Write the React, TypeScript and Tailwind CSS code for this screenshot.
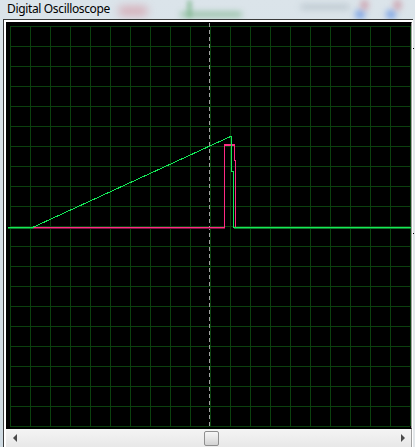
import React from "react";

const GRID = "#0b400e";
const SIG_G = "#14e858";
const SIG_M = "#ff2a84";

function Scope() {
  // SVG local coords: page x - 7, page y - 23
  const xs: number[] = [];
  const ys: number[] = [];
  for (let k = 0; k <= 20; k++) {
    xs.push(3 + 20 * k);
    ys.push(3 + 20 * k);
  }
  const X = (px: number) => px - 7 + 0.5;
  const Y = (py: number) => py - 23 + 0.5;
  return (
    <svg width={404} height={405} className="block" style={{ background: "#000" }}>
      <g shapeRendering="crispEdges" stroke={GRID} strokeWidth={1}>
        {xs.map((x) => (
          <line key={"v" + x} x1={x + 0.5} y1={3} x2={x + 0.5} y2={403} />
        ))}
        {ys.map((y) => (
          <line key={"h" + y} x1={3} y1={y + 0.5} x2={403} y2={y + 0.5} />
        ))}
      </g>
      <line
        x1={X(209)}
        y1={0}
        x2={X(209)}
        y2={405}
        stroke="#a0a0a0"
        strokeWidth={1}
        strokeDasharray="4 3"
        shapeRendering="crispEdges"
      />
      {/* magenta trace */}
      <polyline
        fill="none"
        stroke={SIG_M}
        strokeWidth={1}
        shapeRendering="crispEdges"
        points={`${X(10)},${Y(227)} ${X(224)},${Y(227)} ${X(224)},${Y(144)} ${X(234)},${Y(144)} ${X(234)},${Y(160)} ${X(235)},${Y(160)} ${X(235)},${Y(227)}`}
      />
      <line x1={X(224)} y1={Y(145)} x2={X(234)} y2={Y(145)} stroke={SIG_M} strokeWidth={1} shapeRendering="crispEdges" />
      <line x1={X(10)} y1={Y(228)} x2={X(224)} y2={Y(228)} stroke="#7a1440" strokeWidth={1} shapeRendering="crispEdges" />
      {/* green trace */}
      <polyline
        fill="none"
        stroke={SIG_G}
        strokeWidth={1}
        points={`${X(32)},${Y(227)} ${X(230)},${Y(136)}`}
        shapeRendering="crispEdges"
      />
      <polyline
        fill="none"
        stroke={SIG_G}
        strokeWidth={1}
        shapeRendering="crispEdges"
        points={`${X(7)},${Y(227)} ${X(32)},${Y(227)}`}
      />
      <polyline
        fill="none"
        stroke={SIG_G}
        strokeWidth={1}
        shapeRendering="crispEdges"
        points={`${X(229)},${Y(136)} ${X(231)},${Y(136)} ${X(231)},${Y(171)} ${X(233)},${Y(171)} ${X(233)},${Y(227)} ${X(411)},${Y(227)}`}
      />
      <line x1={X(7)} y1={Y(228)} x2={X(32)} y2={Y(228)} stroke="#0c7a2c" strokeWidth={1} shapeRendering="crispEdges" />
      <line x1={X(233)} y1={Y(228)} x2={X(411)} y2={Y(228)} stroke="#0c7a2c" strokeWidth={1} shapeRendering="crispEdges" />
    </svg>
  );
}

function ScrollBar() {
  return (
    <div className="h-[18px] flex items-center justify-between bg-gradient-to-b from-[#f4f4f4] to-[#e8e8e8]">
      <div className="w-[17px] h-full flex items-center justify-center pl-[1px]">
        <svg width="5" height="8" viewBox="0 0 5 8">
          <path d="M4 0 L0 4 L4 8 Z" fill="#4a4a4a" />
        </svg>
      </div>
      <div className="flex-1 h-full flex items-center justify-center">
        <div className="w-[15px] h-[15px] ml-[5px] rounded-[2px] border border-[#8f8f8f] bg-gradient-to-b from-[#f6f6f6] via-[#e6e6e6] to-[#d2d2d2]" />
      </div>
      <div className="w-[17px] h-full flex items-center justify-center pr-[1px]">
        <svg width="5" height="8" viewBox="0 0 5 8">
          <path d="M1 0 L5 4 L1 8 Z" fill="#4a4a4a" />
        </svg>
      </div>
    </div>
  );
}

export default function App() {
  return (
    <div className="w-[415px] h-[447px] overflow-hidden relative flex flex-col bg-gradient-to-b from-[#dbe4ea] to-[#cfdbe3]">
      {/* blurred aero background blobs */}
      <div className="absolute left-[118px] top-[6px] w-[30px] h-[10px] rounded-full bg-[#d49aa6] blur-[4px] opacity-70" />
      <div className="absolute left-[180px] top-[12px] w-[62px] h-[5px] rounded-full bg-[#7fb78e] blur-[3px] opacity-80" />
      <div className="absolute left-[187px] top-[0px] w-[5px] h-[18px] rounded-full bg-[#7fb78e] blur-[2px] opacity-70" />
      <div className="absolute left-[300px] top-[4px] w-[50px] h-[6px] rounded-full bg-[#b8c4cc] blur-[3px] opacity-80" />
      <div className="absolute left-[355px] top-[10px] w-[10px] h-[9px] rounded-full bg-[#7aa2e6] blur-[3px]" />
      <div className="absolute left-[361px] top-[0px] w-[7px] h-[10px] rounded-full bg-[#c98c9a] blur-[3px] opacity-80" />
      <div className="absolute left-[386px] top-[10px] w-[10px] h-[9px] rounded-full bg-[#7aa2e6] blur-[3px]" />
      <div className="absolute left-[394px] top-[0px] w-[7px] h-[10px] rounded-full bg-[#c98c9a] blur-[3px] opacity-80" />

      <div
        className="relative h-[19px] shrink-0 pl-[7px] text-[12px] leading-[18px] tracking-[-0.35px] text-black"
        style={{ fontFamily: '"Noto Sans", "Open Sans", sans-serif' }}
      >
        Digital Oscilloscope
      </div>
      <div className="relative flex-1 flex">
        <div className="ml-[3px] w-[410px] border-l border-t border-[#3a3a3a] bg-white pl-[2px] pt-[2px] pr-[1px]">
          <div className="border-l border-t border-b border-black border-r border-r-[#a0a0a0] bg-black">
            <Scope />
          </div>
          <div className="border-r border-[#a0a0a0] bg-[#ececec]">
            <ScrollBar />
          </div>
        </div>
        <div className="flex-1 flex flex-col bg-[#e2e6e9]">
          <div className="h-[29px]" />
          <div className="h-[1px] w-[1px] bg-black" />
          <div className="h-[184px]" />
          <div className="h-[1px] w-[1px] bg-black" />
        </div>
      </div>
    </div>
  );
}
